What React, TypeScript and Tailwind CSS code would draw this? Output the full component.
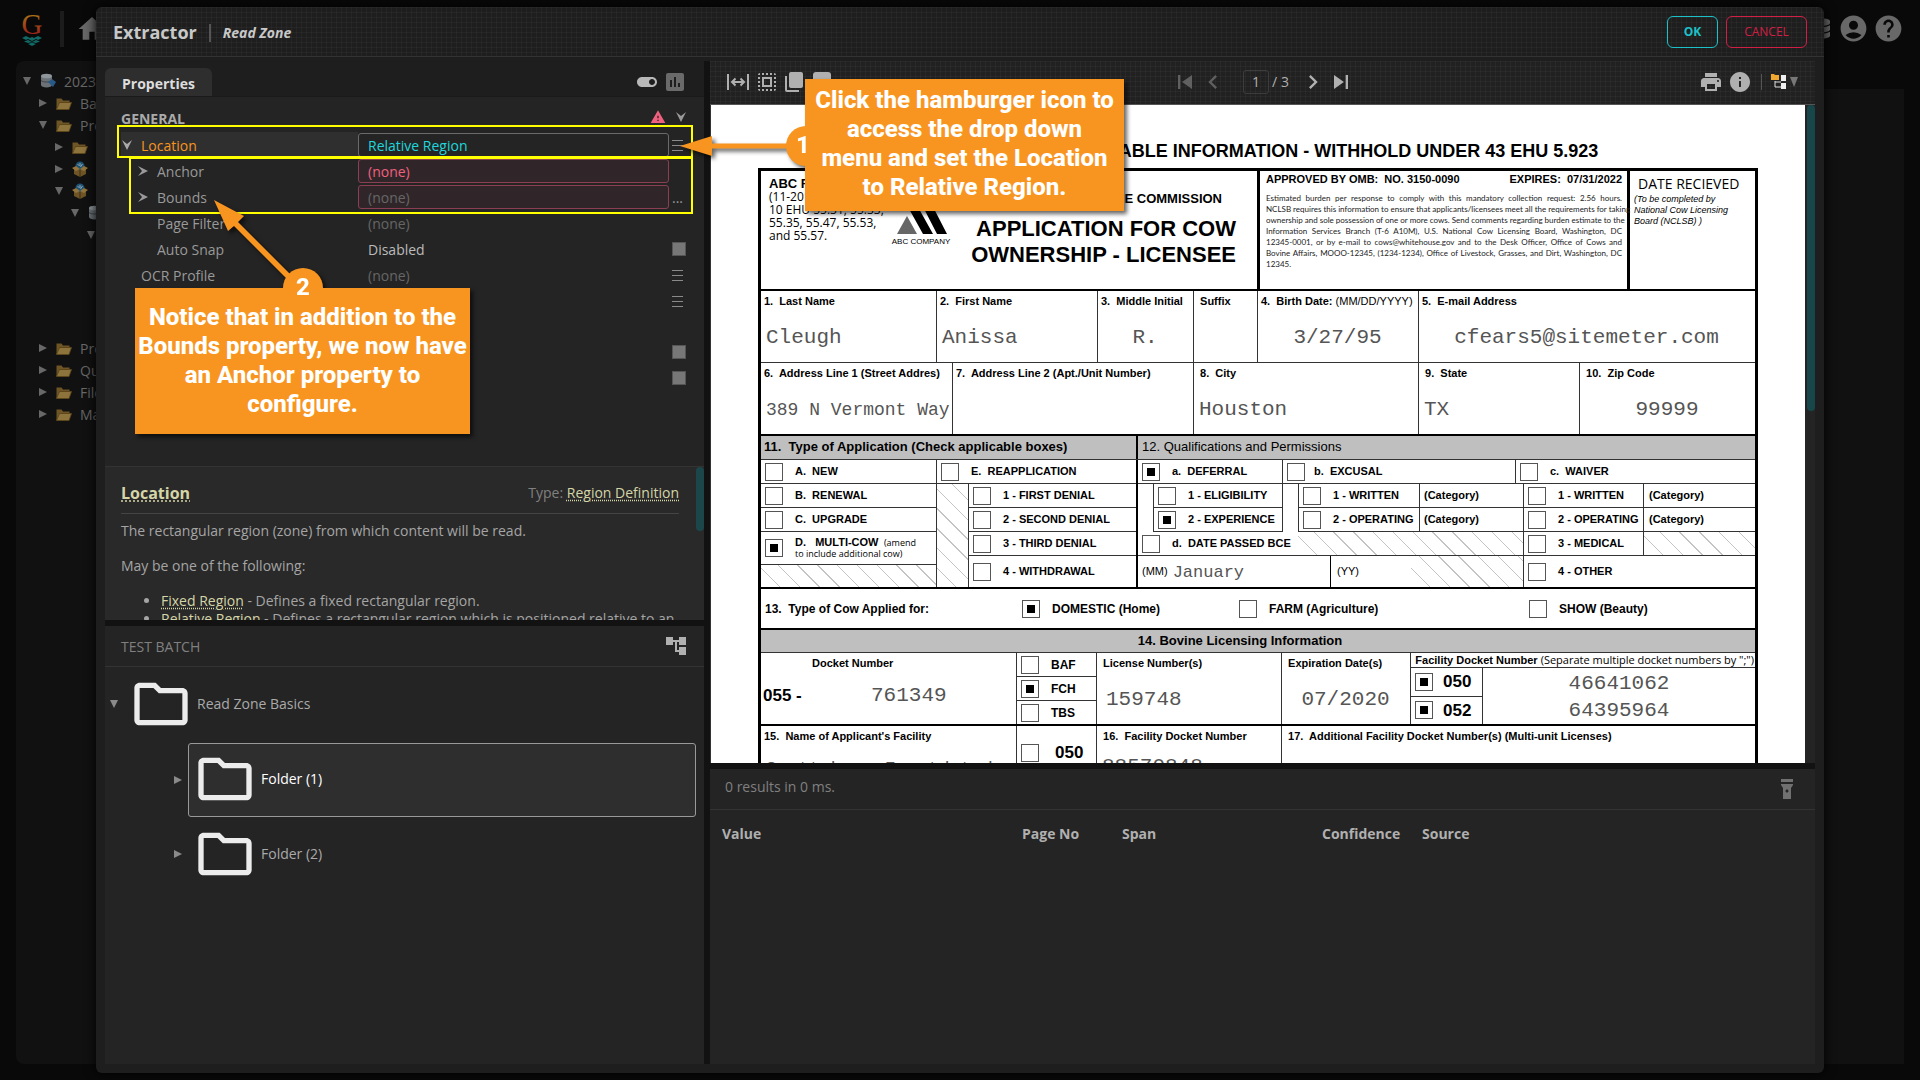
import type { ReactNode } from "react";
import { FaDatabase } from "react-icons/fa";
import {
  MdAccountCircle,
  MdAccountTree,
  MdAssessment,
  MdChevronLeft,
  MdChevronRight,
  MdFlashlightOn,
  MdHelp,
  MdHome,
  MdInfo,
  MdOutlineFolder,
  MdPrint,
  MdSelectAll,
  MdSkipNext,
  MdSkipPrevious,
  MdToggleOn,
  MdWarning,
} from "react-icons/md";

const GRID =
  "bg-[linear-gradient(to_right,#ffffff08_1px,transparent_1px),linear-gradient(to_bottom,#ffffff08_1px,transparent_1px)] bg-[size:5px_5px]";
const HATCH =
  "bg-[repeating-linear-gradient(45deg,#fff_0,#fff_13px,#c4c4c4_13px,#c4c4c4_14px)]";

/* ---------- small icons ---------- */

function Notch({ className = "" }: { className?: string }) {
  return (
    <svg viewBox="0 0 10 10" className={`h-[10px] w-[10px] shrink-0 ${className}`} fill="currentColor">
      <path d="M0 0 10 5 0 10 4 5z" />
    </svg>
  );
}

function Triangle({ open = false }: { open?: boolean }) {
  return (
    <svg viewBox="0 0 10 10" className="h-[10px] w-[10px] shrink-0" fill="currentColor">
      <path d={open ? "M1 1h8L5 9z" : "M1 1v8l8-4z"} />
    </svg>
  );
}

function OpenFolder() {
  return (
    <svg viewBox="0 0 16 13" className="h-[13px] w-4 shrink-0">
      <path d="M0.5 12V1.5h5l1.5 2h6.5V5H4L1.5 12z" fill="#6f5526" />
      <path d="M0.5 12.5 3.5 5.5h12L13 12.5z" fill="#8d733c" stroke="#5f4718" strokeWidth="0.8" />
    </svg>
  );
}

function Project() {
  return (
    <svg viewBox="0 0 16 16" className="h-4 w-4 shrink-0">
      <circle cx="8" cy="5" r="4.5" fill="#1f5373" />
      <path d="M5.5 3l2 2M8 2v3M10.5 3l-2 3" stroke="#8fa3ad" />
      <path d="M2 7l6 2 6-2v6l-6 3-6-3z" fill="#6f5526" />
      <path d="M8 9v7" stroke="#3d2f14" />
      <path d="M0 7l4-2 4 3 4-3 4 2-4 3-4-2-4 2z" fill="#94743a" />
    </svg>
  );
}

function Database() {
  return (
    <svg viewBox="0 0 16 16" className="h-4 w-4 shrink-0">
      <path d="M1 3v9c0 1.500 2.500 2.500 5.500 2.500S12 13.500 12 12V3z" fill="#6c7277" />
      <path d="M1 7.500c2 2 9 2 11 0" stroke="#3f4447" fill="none" />
      <ellipse cx="6.500" cy="3" rx="5.500" ry="2.300" fill="#8f979c" />
      <path d="M8 9l4-3 4 3-3 5z" fill="#285a86" />
    </svg>
  );
}

function FitWidth() {
  return (
    <svg viewBox="0 0 22 18" className="h-[18px] w-[22px]" fill="none" stroke="currentColor" strokeWidth="2">
      <path d="M1 1v16M21 1v16M5 9h12M8.500 5.500 5 9l3.500 3.500M13.500 5.500 17 9l-3.500 3.500" />
    </svg>
  );
}

function Pages() {
  return (
    <svg viewBox="0 0 18 20" className="h-5 w-[18px]" fill="currentColor">
      <rect x="4" y="0" width="14" height="16" rx="2" />
      <path d="M0 4h2v14h12v2H2a2 2 0 0 1-2-2z" />
    </svg>
  );
}

function MenuLines() {
  return (
    <svg viewBox="0 0 11 11" className="h-[11px] w-[11px]" stroke="#8a8a8a">
      <path d="M0 0.500h11M0 5.500h11M0 10.500h11" />
    </svg>
  );
}

/* ---------- page behind the dialog ---------- */

function TreeRow({ pad, open, icon, children }: { pad: string; open?: boolean; icon?: ReactNode; children?: ReactNode }) {
  return (
    <li className={`flex h-[22px] items-center ${pad}`}>
      <Triangle open={open} />
      <span className="ml-2 flex w-6 items-center">{icon}</span>
      <span className="text-[14px]">{children}</span>
    </li>
  );
}

function Backdrop() {
  return (
    <div className="flex h-screen flex-col bg-[#090909] text-[#686868]">
      <header className="flex h-[61px] shrink-0 items-center justify-between pr-4 pb-1 pl-5">
        <div className="flex items-center">
          <svg viewBox="0 0 24 34" className="mr-4 h-[34px] w-6 overflow-visible" role="img" aria-label="Logo">
            <defs>
              <linearGradient id="g" x1="0" y1="0" x2="0" y2="1">
                <stop offset="0.2" stopColor="#a87016" />
                <stop offset="0.8" stopColor="#98241a" />
              </linearGradient>
            </defs>
            <text x="12" y="22" textAnchor="middle" fontSize="29" fontFamily="Liberation Serif, serif" fill="url(#g)">
              G
            </text>
            <path d="M2 26l4-2 4 2-4 2zM14 26l4-2 4 2-4 2zM8 27l4-2 4 2-4 2zM4 29.500l4-1.500 4 2 4-2 4 1.500-4 1.500-4-1-4 1zM8 32l4-1.500 4 1.500-4 2z" fill="#0f6a66" />
          </svg>
          <span className="h-9 w-1 bg-[#1c1c1c]" />
          <MdHome className="ml-3 h-8 w-8" />
        </div>
        <div className="flex items-center gap-1">
          <FaDatabase className="h-[21px] w-[18px]" />
          <MdAccountCircle className="ml-1 h-[31px] w-[31px]" />
          <MdHelp className="h-[31px] w-[31px]" />
        </div>
      </header>
      <div className="flex flex-1 gap-[9px] px-4 pb-4">
        <ul className="w-[240px] rounded-lg bg-[#111] pt-[9px]">
          <TreeRow pad="pl-[6px]" open icon={<Database />}>2023</TreeRow>
          <TreeRow pad="pl-[22px]" icon={<OpenFolder />}>Batches</TreeRow>
          <TreeRow pad="pl-[22px]" open icon={<OpenFolder />}>Projects</TreeRow>
          <TreeRow pad="pl-[38px]" icon={<OpenFolder />} />
          <TreeRow pad="pl-[38px]" icon={<Project />} />
          <TreeRow pad="pl-[38px]" open icon={<Project />} />
          <TreeRow pad="pl-[54px]" open icon={<Database />} />
          <TreeRow pad="pl-[70px]" open />
          <li className="h-[91px]" />
          <TreeRow pad="pl-[22px]" icon={<OpenFolder />}>Processes</TreeRow>
          <TreeRow pad="pl-[22px]" icon={<OpenFolder />}>Queues</TreeRow>
          <TreeRow pad="pl-[22px]" icon={<OpenFolder />}>File Stores</TreeRow>
          <TreeRow pad="pl-[22px]" icon={<OpenFolder />}>Machines</TreeRow>
        </ul>
        <div className="mt-7 flex-1 bg-[#111]" />
      </div>
    </div>
  );
}

/* ---------- property grid ---------- */

type PropertyProps = {
  label?: string;
  pad?: string;
  value?: string;
  tone?: string;
  box?: string;
  arrow?: "open" | "closed";
  selected?: boolean;
  end?: "menu" | "dots" | "square";
};

function Property({ label, pad = "pl-5", value, tone = "text-[#666]", box = "border-transparent", arrow, selected, end }: PropertyProps) {
  return (
    <div className="flex h-[26px] items-center">
      <div
        className={`flex h-[26px] w-[237px] shrink-0 items-center text-[14px] ${
          selected ? "bg-[#2f2f2f] text-[#f79420]" : "text-[#999]"
        } ${pad}`}
      >
        {arrow && <Notch className={arrow === "open" ? "mr-[9px] rotate-90 text-[#aaa]" : "mr-[9px] text-[#999]"} />}
        {label}
      </div>
      <input
        aria-label={label || "Value"}
        readOnly
        value={value ?? ""}
        className={`h-6 min-w-0 flex-1 rounded-[3px] border px-[9px] text-[14px] outline-none ${box} ${tone}`}
      />
      <button type="button" aria-label={`Edit ${label ?? "value"}`} className="ml-[3px] flex h-6 w-4 shrink-0 items-center text-[#999]">
        {end === "menu" && <MenuLines />}
        {end === "dots" && <span className="text-[14px]">...</span>}
        {end === "square" && <span className="h-[14px] w-[14px] border border-[#555] bg-[#777]" />}
      </button>
    </div>
  );
}

const PINK_BOX = "border-[#8a3f52] bg-[#30262a]";

function Properties() {
  return (
    <section className="flex min-h-0 flex-1 flex-col bg-[#242424]">
      <div className="flex h-9 shrink-0 items-end justify-between border-b border-[#1a1a1a] bg-[#1e1e1e]">
        <button type="button" className="h-7 w-[107px] rounded-t-md bg-[#2e2e2e] pt-[2px] text-[14px] font-bold text-[#ddd]">
          Properties
        </button>
        <div className="flex h-7 items-center gap-1 pr-[17px] text-[#b8b8b8]">
          <MdToggleOn className="h-6 w-6" />
          <MdAssessment className="h-6 w-6 text-[#6a6a6a]" />
        </div>
      </div>
      <div className="flex h-[35px] shrink-0 items-end justify-between pr-[18px] pb-[3px] pl-4">
        <h2 className="text-[14px] font-bold text-[#aaa]">GENERAL</h2>
        <div className="flex items-center gap-[10px] pb-1">
          <MdWarning className="h-4 w-4 text-[#f0607f]" />
          <Notch className="rotate-90 text-[#999]" />
        </div>
      </div>
      <div className="pr-4 pl-4">
        <Property label="Location" pad="pl-[1px]" value="Relative Region" tone="text-[#1fd6dc]" box="border-[#6a6a6a]" arrow="open" selected end="menu" />
        <Property label="Anchor" pad="pl-[17px]" value="(none)" tone="text-[#f0607f]" box={PINK_BOX} arrow="closed" />
        <Property label="Bounds" pad="pl-[17px]" value="(none)" box={PINK_BOX} arrow="closed" end="dots" />
        <Property label="Page Filter" pad="pl-9" value="(none)" />
        <Property label="Auto Snap" pad="pl-9" value="Disabled" tone="text-[#bbb]" end="square" />
        <Property label="OCR Profile" value="(none)" end="menu" />
        <Property end="menu" />
        <div className="h-[25px]" />
        <Property end="square" />
        <Property end="square" />
      </div>
    </section>
  );
}

function HelpLink({ children }: { children: ReactNode }) {
  return (
    <a href="#" className="text-[#d5d5a8] underline decoration-dotted underline-offset-2">
      {children}
    </a>
  );
}

function Help() {
  return (
    <section className="flex h-[154px] shrink-0 border-t border-[#333] bg-[#292929] text-[14px] leading-[18px] text-[#a5a5a5]">
      <div className="flex-1 overflow-hidden pr-[17px] pl-4">
        <div className="flex h-[47px] items-end justify-between border-b border-[#444] pb-[11px]">
          <h3 className="text-[16px] leading-[18px] font-bold">
            <HelpLink>Location</HelpLink>
          </h3>
          <p className="text-[#808080]">
            Type: <HelpLink>Region Definition</HelpLink>
          </p>
        </div>
        <p className="mt-2">The rectangular region (zone) from which content will be read.</p>
        <p className="mt-[17px]">May be one of the following:</p>
        <ul className="mt-[17px] list-disc pl-10">
          <li>
            <HelpLink>Fixed Region</HelpLink> - Defines a fixed rectangular region.
          </li>
          <li className="whitespace-nowrap">
            <HelpLink>Relative Region</HelpLink> - Defines a rectangular region which is positioned relative to an
          </li>
        </ul>
      </div>
      <div className="w-2 shrink-0">
        <div className="h-16 rounded-full bg-[#1c474a]" />
      </div>
    </section>
  );
}

function TestBatch() {
  return (
    <section className="h-[438px] shrink-0 bg-[#242424] text-[14px] text-[#aaa]">
      <div className="flex h-[41px] items-center justify-between border-b border-[#333] pr-4 pl-4">
        <h2 className="text-[#808080]">TEST BATCH</h2>
        <MdAccountTree className="h-6 w-6 text-[#b0b0b0]" />
      </div>
      <ul className="text-[#8a8a8a]">
        <li className="flex h-[75px] items-center pb-[2px] pl-1">
          <Triangle open />
          <span className="flex items-center pl-[10px] text-[#aaa]">
            <MdOutlineFolder className="h-16 w-16 text-[#ececec]" />
            <span className="pl-1">Read Zone Basics</span>
          </span>
        </li>
        <li className="flex h-[75px] items-center gap-[5px] pr-2 pl-[68px]">
          <Triangle />
          <span className="flex h-[74px] flex-1 items-center rounded-[3px] border border-[#999] bg-[#2e2e2e] pb-[2px] pl-1 text-white">
            <MdOutlineFolder className="h-16 w-16 text-[#ececec]" />
            <span className="pl-1">Folder (1)</span>
          </span>
        </li>
        <li className="flex h-[75px] items-center gap-[5px] pr-2 pb-[2px] pl-[68px]">
          <Triangle />
          <span className="flex items-center pl-[5px] text-[#aaa]">
            <MdOutlineFolder className="h-16 w-16 text-[#ececec]" />
            <span className="pl-1">Folder (2)</span>
          </span>
        </li>
      </ul>
    </section>
  );
}

/* ---------- document ---------- */

function Check({ label, checked, gap = "pl-3", pad = "pl-1", className = "", children }: { label?: string; checked?: boolean; gap?: string; pad?: string; className?: string; children?: ReactNode }) {
  return (
    <label className={`flex items-center ${pad} ${className}`}>
      <input
        type="checkbox"
        defaultChecked={checked}
        className="h-[18px] w-[18px] shrink-0 appearance-none border border-[#555] bg-clip-content p-1 checked:bg-black"
      />
      <span className={`whitespace-pre ${gap}`}>{label ?? children}</span>
    </label>
  );
}

type FieldProps = {
  label: string;
  value?: string;
  note?: string;
  width?: string;
  align?: string;
  space?: string;
  small?: boolean;
};

function Field({ label, value, note, width = "flex-1", align = "pl-[2px] text-left", space = "mt-4", small }: FieldProps) {
  return (
    <div className={`border-r border-[#333] pt-[3px] pl-[3px] last:border-r-0 ${width}`}>
      <p className="text-[11px] leading-[14px] font-bold whitespace-pre">
        {label}
        {note && <span className="font-normal">{note}</span>}
      </p>
      <p
        className={`font-['Liberation_Mono',monospace] leading-7 whitespace-nowrap text-[#555] ${
          small ? "text-[18px]" : "text-[21px]"
        } ${align} ${space}`}
      >
        {value}
      </p>
    </div>
  );
}

function FormHead() {
  return (
    <div className="flex h-[120px] border-b-2">
      <div className="flex w-[499px] border-r-[3px]">
        <div className="w-[120px] pt-[6px] pl-2 font-['Open_Sans',sans-serif] text-[12px] leading-[13px] whitespace-nowrap">
          <p className="font-['Liberation_Sans',sans-serif] text-[13px] font-bold">ABC FORM</p>
          <p>(11-2018)</p>
          <p>10 EHU 55.31, 55.33,</p>
          <p>55.35, 55.47, 55.53,</p>
          <p>and 55.57.</p>
        </div>
        <div className="flex w-[76px] flex-col items-center justify-end pb-[42px] pl-1">
          <svg viewBox="0 0 52 36" className="h-9 w-[52px]">
            <path d="M2 35 12 17l10 18z" fill="#666" />
            <path d="M13 8h10l15 27H28zM24 0h10l18 35H42z" />
          </svg>
          <p className="mt-[2px] text-[8px] leading-[10px] whitespace-nowrap">ABC COMPANY</p>
        </div>
        <div className="flex-1 pt-5 pr-[21px] text-right font-bold">
          <p className="pr-[14px] text-[13px] leading-4">NATIONAL BOVINE COMMISSION</p>
          <p className="mt-[9px] text-[22px] leading-[26px] whitespace-nowrap">
            APPLICATION FOR COW
            <br />
            OWNERSHIP - LICENSEE
          </p>
        </div>
      </div>
      <div className="w-[370px] border-r-[3px] pr-[5px] pl-[6px]">
        <div className="flex justify-between text-[11px] leading-4 font-bold whitespace-pre">
          <span>APPROVED BY OMB:  NO. 3150-0090</span>
          <span>EXPIRES:  07/31/2022</span>
        </div>
        <div className="mt-[6px] font-['Lato',sans-serif] text-[8px] leading-[11px] whitespace-nowrap text-[#222] [text-align-last:justify]">
          <p>Estimated burden per response to comply with this mandatory collection request: 2.56 hours.</p>
          <p>NCLSB requires this information to ensure that applicants/licensees meet all the requirements for taking</p>
          <p>ownership and sole possession of one or more cows. Send comments regarding burden estimate to the</p>
          <p>Information Services Branch (T-6 A10M), U.S. National Cow Licensing Board, Washington, DC</p>
          <p>12345-0001, or by e-mail to cows@whitehouse.gov and to the Desk Officer, Office of Cows and</p>
          <p>Bovine Affairs, MOOO-12345, (1234-1234), Office of Livestock, Grasses, and Dirt, Washington, DC</p>
          <p className="[text-align-last:left]">12345.</p>
        </div>
      </div>
      <div className="flex-1 pt-[3px] pl-1">
        <p className="pl-1 font-['Open_Sans',sans-serif] text-[14px] leading-5">DATE RECIEVED</p>
        <p className="text-[9px] leading-[11px] italic">
          (To be completed by
          <br />
          National Cow Licensing
          <br />
          Board (NCLSB) )
        </p>
      </div>
    </div>
  );
}

function TypeOfApplication() {
  return (
    <div className="flex w-[377px] border-r-2">
      <div className="flex w-[176px] flex-col border-r border-[#333]">
        <Check label="A.  NEW" className="h-6 border-b border-[#333]" />
        <Check label="B.  RENEWAL" className="h-6 border-b border-[#333]" />
        <Check label="C.  UPGRADE" className="h-6 border-b border-[#333]" />
        <Check checked className="h-[33px] border-b border-[#333] leading-[11px]">
          D.   MULTI-COW <span className="font-['Open_Sans',sans-serif] text-[9px] font-normal"> (amend</span>
          <br />
          <span className="font-['Open_Sans',sans-serif] text-[9px] font-normal">to include additional cow)</span>
        </Check>
        <div className={`flex-1 ${HATCH}`} />
      </div>
      <div className="flex flex-1 flex-col">
        <Check label="E.  REAPPLICATION" className="h-6 border-b border-[#333]" />
        <div className="flex flex-1">
          <div className={`w-8 border-r border-[#333] ${HATCH}`} />
          <div className="flex flex-1 flex-col">
            <Check label="1 - FIRST DENIAL" className="h-6 border-b border-[#333]" />
            <Check label="2 - SECOND DENIAL" className="h-6 border-b border-[#333]" />
            <Check label="3 - THIRD DENIAL" className="h-6 border-b border-[#333]" />
            <Check label="4 - WITHDRAWAL" className="flex-1" />
          </div>
        </div>
      </div>
    </div>
  );
}

function Category() {
  return <div className="flex flex-1 items-center border-r border-[#333] pl-1">(Category)</div>;
}

function Qualifications() {
  return (
    <div className="flex flex-1 flex-col">
      <div className="flex h-6 border-b border-[#333]">
        <Check label="a.  DEFERRAL" checked className="w-[145px] border-r border-[#333]" />
        <Check label="b.  EXCUSAL" gap="pl-[9px]" className="w-[233px] border-r border-[#333]" />
        <Check label="c.  WAIVER" className="flex-1" />
      </div>
      <div className="flex">
        <div className="flex w-[145px] border-r border-[#333] pl-[15px]">
          <div className="flex flex-1 flex-col border-l border-[#333]">
            <Check label="1 - ELIGIBILITY" className="h-6 border-b border-[#333]" />
            <Check label="2 - EXPERIENCE" checked className="h-6 border-b border-[#333]" />
          </div>
        </div>
        <div className="flex flex-1 flex-col pl-[15px]">
          <div className="flex h-6 border-b border-l border-[#333]">
            <Check label="1 - WRITTEN" className="w-[121px] border-r border-[#333]" />
            <Category />
          </div>
          <div className="flex h-6 border-b border-l border-[#333]">
            <Check label="2 - OPERATING" className="w-[121px] border-r border-[#333]" />
            <Category />
          </div>
        </div>
        <div className="flex w-[231px] flex-col">
          <div className="flex h-6 border-b border-[#333]">
            <Check label="1 - WRITTEN" className="w-[120px] border-r border-[#333]" />
            <span className="flex items-center pl-[5px]">(Category)</span>
          </div>
          <div className="flex h-6 border-b border-[#333]">
            <Check label="2 - OPERATING" className="w-[120px] border-r border-[#333]" />
            <span className="flex items-center pl-[5px]">(Category)</span>
          </div>
        </div>
      </div>
      <div className="flex h-6 border-b border-[#333]">
        <Check label="d.  DATE PASSED BCE" className="w-[160px]" />
        <div className={`flex-1 border-r border-[#333] ${HATCH}`} />
        <Check label="3 - MEDICAL" className="w-[120px] border-r border-[#333]" />
        <div className={`w-[111px] ${HATCH}`} />
      </div>
      <div className="flex flex-1">
        <div className="flex w-[193px] items-center border-r border-black pl-1 font-normal">
          <span className="text-[11px]">(MM)</span>
          <span className="pt-[2px] pl-[5px] font-['Liberation_Mono',monospace] text-[17px] text-[#555]">January</span>
        </div>
        <div className="flex flex-1 items-center border-r border-[#333] pl-[6px] text-[11px] font-normal">
          <span className="w-[74px]">(YY)</span>
          <div className={`h-full flex-1 ${HATCH}`} />
        </div>
        <Check label="4 - OTHER" className="w-[231px]" />
      </div>
    </div>
  );
}

function LicensingRow() {
  return (
    <div className="flex h-[73px] border-b-2">
      <div className="w-[256px] border-r border-[#333] pt-[3px]">
        <p className="pl-[51px] text-[11px] leading-[14px] font-bold">Docket Number</p>
        <div className="flex items-baseline pt-[10px] pl-[2px]">
          <span className="w-[108px] text-[17px] font-bold">055 -</span>
          <span className="font-['Liberation_Mono',monospace] text-[21px] text-[#555]">761349</span>
        </div>
      </div>
      <div className="flex w-20 flex-col border-r border-[#333] text-[12px] font-bold">
        <Check label="BAF" className="flex-1 border-b border-[#333]" />
        <Check label="FCH" checked className="flex-1 border-b border-[#333]" />
        <Check label="TBS" className="flex-1" />
      </div>
      <Field label=" License Number(s)" value="159748" width="w-[185px]" align="pl-[6px] text-left" />
      <Field label=" Expiration Date(s)" value="07/2020" width="w-[129px]" align="pr-1 text-center" />
      <div className="flex flex-1 flex-col">
        <p className="h-4 border-b border-[#333] pr-px text-right text-[11px] leading-[14px] font-bold whitespace-nowrap">
          Facility Docket Number <span className="font-['Open_Sans',sans-serif] font-normal">(Separate multiple docket numbers by ";")</span>
        </p>
        <div className="flex flex-1">
          <div className="flex w-[72px] flex-col border-r border-[#333] text-[17px] font-bold">
            <Check label="050" checked gap="pl-[10px]" className="flex-1 border-b border-[#333]" />
            <Check label="052" checked gap="pl-[10px]" className="flex-1" />
          </div>
          <div className="flex-1 pt-[2px] text-center font-['Liberation_Mono',monospace] text-[21px] leading-[27px] text-[#555]">
            <p>46641062</p>
            <p>64395964</p>
          </div>
        </div>
      </div>
    </div>
  );
}

function Form() {
  return (
    <div className="mx-auto flex w-[1000px] shrink-0 flex-col border-[3px] border-black text-black [&_*]:border-solid">
      <FormHead />
      <div className="flex h-[72px] border-b border-[#333]">
        <Field label="1.  Last Name" value="Cleugh" width="w-[176px]" />
        <Field label="2.  First Name" value="Anissa" width="w-[161px]" />
        <Field label="3.  Middle Initial" value="R." width="w-[96px]" align="pr-1 text-center" />
        <Field label=" Suffix" width="w-[64px]" />
        <Field label="4.  Birth Date: " note="(MM/DD/YYYY)" value="3/27/95" width="w-[161px]" align="pr-1 text-center" />
        <Field label="5.  E-mail Address" value="cfears5@sitemeter.com" align="pr-1 text-center" />
      </div>
      <div className="flex h-[73px] border-b-2">
        <Field label="6.  Address Line 1 (Street Addres)" value="389 N Vermont Way" width="w-[192px]" small />
        <Field label="7.  Address Line 2 (Apt./Unit Number)" width="w-[241px]" />
        <Field label=" 8.  City" value="Houston" width="w-[225px]" />
        <Field label=" 9.  State" value="TX" width="w-[161px]" />
        <Field label=" 10.  Zip Code" value="99999" align="pr-1 text-center" />
      </div>
      <div className="flex h-6 border-b border-[#333] bg-[#bfbfbf] text-[13px] leading-[22px] whitespace-pre">
        <p className="w-[377px] border-r-2 border-black pl-[3px] font-bold">11.  Type of Application (Check applicable boxes)</p>
        <p className="pl-1">12. Qualifications and Permissions</p>
      </div>
      <div className="flex h-[129px] border-b-2 text-[11px] font-bold">
        <TypeOfApplication />
        <Qualifications />
      </div>
      <div className="flex h-[41px] items-center border-b-2 text-[12px] font-bold">
        <p className="w-[257px] pl-1 whitespace-pre">13.  Type of Cow Applied for:</p>
        <Check label="DOMESTIC (Home)" checked className="w-[217px]" />
        <Check label="FARM (Agriculture)" className="w-[290px]" />
        <Check label="SHOW (Beauty)" />
      </div>
      <p className="h-[23px] border-b border-[#333] bg-[#bfbfbf] pr-[36px] text-center text-[13px] leading-[22px] font-bold">
        14. Bovine Licensing Information
      </p>
      <LicensingRow />
      <div className="flex h-[73px]">
        <Field label="15.  Name of Applicant's Facility" value="Scottsboro Frontdated" width="w-[256px]" space="mt-3" small />
        <div className="w-20 border-r border-[#333] pt-[14px] text-[17px] font-bold">
          <Check label="050" gap="pl-4" />
        </div>
        <Field label=" 16.  Facility Docket Number" value="88570848" width="w-[185px]" space="mt-[10px]" />
        <Field label=" 17.  Additional Facility Docket Number(s) (Multi-unit Licenses)" />
      </div>
    </div>
  );
}

function Viewer() {
  return (
    <section className="flex min-h-0 flex-1 flex-col">
      <div className={`flex h-11 shrink-0 items-center border-b border-[#555] bg-[#212121] pr-4 pb-[2px] pl-[17px] text-[#b0b0b0] ${GRID}`}>
        <div className="flex flex-1 items-center gap-[6px]">
          <button type="button" aria-label="Fit width"><FitWidth /></button>
          <button type="button" aria-label="Select all"><MdSelectAll className="h-6 w-6" /></button>
          <button type="button" aria-label="Pages"><Pages /></button>
          <span className="ml-1 h-5 w-[18px] rounded-[3px] bg-[#b0b0b0]" />
        </div>
        <div className="flex items-center text-[14px]">
          <button type="button" aria-label="First page" className="text-[#606060]"><MdSkipPrevious className="h-7 w-7" /></button>
          <button type="button" aria-label="Previous page" className="text-[#606060]"><MdChevronLeft className="h-7 w-7" /></button>
          <input aria-label="Page" defaultValue="1" className="ml-4 h-6 w-[26px] rounded-[3px] border border-[#3c3c3c] text-center" />
          <span className="ml-[3px]">/ 3</span>
          <button type="button" aria-label="Next page" className="ml-[10px]"><MdChevronRight className="h-7 w-7" /></button>
          <button type="button" aria-label="Last page"><MdSkipNext className="h-7 w-7" /></button>
        </div>
        <div className="flex flex-1 items-center justify-end">
          <MdPrint className="h-6 w-6" />
          <MdInfo className="ml-[5px] h-6 w-6" />
          <span className="mx-[9px] h-4 w-px bg-[#555]" />
          <button type="button" aria-label="Document tree" className="flex items-center">
            <svg viewBox="0 0 16 16" className="h-4 w-4">
              <path d="M4 7v6h6M4 8h6" stroke="#ddd" fill="none" />
              <path d="M0 0h3l1 1h4v5H0z" fill="#f0a830" />
              <path d="M10 1h5v6h-5zM10 9h5v6h-5z" fill="#eee" />
            </svg>
            <svg viewBox="0 0 10 10" className="ml-[2px] h-[10px] w-[10px]" fill="#777">
              <path d="M1 0h8L5 10z" />
            </svg>
          </button>
        </div>
      </div>
      <div className="flex min-h-0 flex-1 border-l border-[#333] bg-[#242424]">
        <div className="min-h-0 flex-1 overflow-hidden bg-white font-['Liberation_Sans',sans-serif]">
          <h1 className="h-[63px] pt-9 text-center text-[18px] leading-5 font-bold text-black">
            PERSONALLY IDENTIFIABLE INFORMATION - WITHHOLD UNDER 43 EHU 5.923
          </h1>
          <Form />
        </div>
        <div className="w-[10px] shrink-0 pl-[2px]">
          <div className="h-[306px] rounded-full bg-[#17474a]" />
        </div>
      </div>
    </section>
  );
}

function Results() {
  return (
    <section className="h-[295px] shrink-0 bg-[#242424] text-[14px]">
      <div className="flex h-[41px] items-center justify-between border-b border-[#333] pr-4 pb-[6px] pl-[15px] text-[#808080]">
        <p>0 results in 0 ms.</p>
        <MdFlashlightOn className="mt-[6px] h-6 w-6 text-[#707070]" />
      </div>
      <table className="w-full table-fixed text-left font-bold text-[#b0b0b0]">
        <thead>
          <tr className="h-[46px]">
            <th className="w-[312px] pl-3">Value</th>
            <th className="w-[100px]">Page No</th>
            <th className="w-[200px]">Span</th>
            <th className="w-[100px]">Confidence</th>
            <th>Source</th>
          </tr>
        </thead>
      </table>
    </section>
  );
}

/* ---------- tutorial callouts ---------- */

const CALLOUT_TEXT = "font-['Roboto',sans-serif] text-[24px] leading-[29px] font-extrabold text-white";

function Callouts() {
  return (
    <>
      <div className="absolute top-[125px] left-[117px] h-[33px] w-[576px] border-2 border-[#ff0]" />
      <div className="absolute top-[157px] left-[129px] h-[57px] w-[564px] border-2 border-[#ff0]" />

      <div className="absolute top-[79px] left-[680px] drop-shadow-[3px_3px_2px_rgba(0,0,0,0.6)]">
        <svg viewBox="0 0 150 132" className="absolute top-0 left-0 h-[132px] w-[150px]" fill="#f89521">
          <path d="M0 67 32 57v7.500h80v5H32V77z" />
          <circle cx="126" cy="67" r="20" />
        </svg>
        <div className="relative ml-[125px] flex h-[132px] w-[319px] items-center justify-center bg-[#f89521] pb-[2px]">
          <p className={`text-center whitespace-nowrap ${CALLOUT_TEXT}`}>
            Click the hamburger icon to
            <br />
            access the drop down
            <br />
            menu and set the Location
            <br />
            to Relative Region.
          </p>
        </div>
        <span className={`absolute top-[52px] left-[116px] ${CALLOUT_TEXT}`}>1</span>
      </div>

      <div className="absolute top-[200px] left-[135px] drop-shadow-[3px_3px_2px_rgba(0,0,0,0.6)]">
        <svg viewBox="0 0 200 110" className="absolute top-0 left-0 h-[110px] w-[200px]" fill="#f89521">
          <path d="M79 0l30 16-6 6 53 53-4 4-53-53-6 5z" />
          <circle cx="168" cy="88" r="20" />
        </svg>
        <div className="relative mt-[88px] flex h-[146px] w-[335px] items-center justify-center bg-[#f89521]">
          <p className={`text-center whitespace-nowrap ${CALLOUT_TEXT}`}>
            Notice that in addition to the
            <br />
            Bounds property, we now have
            <br />
            an Anchor property to
            <br />
            configure.
          </p>
        </div>
        <span className={`absolute top-[73px] left-[161px] ${CALLOUT_TEXT}`}>2</span>
      </div>
    </>
  );
}

export default function App() {
  return (
    <main className="relative h-screen overflow-hidden font-['Open_Sans',sans-serif]">
      <Backdrop />
      <div role="dialog" aria-label="Extractor" className="absolute inset-x-24 inset-y-[7px] flex flex-col rounded-md bg-[#1e1e1e] shadow-[0_0_12px_#000]">
        <header className={`flex h-[50px] shrink-0 items-center justify-between rounded-t-md border-b border-[#333] pr-[17px] pl-[17px] ${GRID}`}>
          <div className="flex items-center pt-[2px] text-[#c8c8c8]">
            <h1 className="text-[18px] font-bold">Extractor</h1>
            <span className="mx-3 h-[18px] w-[2px] bg-[#555]" />
            <p className="text-[14px] font-bold italic">Read Zone</p>
          </div>
          <div className="flex gap-2 text-[12px]">
            <button type="button" className="h-8 w-[51px] rounded-md border border-[#1cc0c8] font-bold text-[#1cc0c8]">OK</button>
            <button type="button" className="h-8 w-[81px] rounded-md border border-[#d01f45] text-[#d01f45]">CANCEL</button>
          </div>
        </header>
        <div className="flex min-h-0 flex-1 px-[9px] pt-1 pb-[9px]">
          <div className="flex min-h-0 flex-1 gap-[6px] bg-[#121212]">
            <div className="flex w-[599px] shrink-0 flex-col">
              <Properties />
              <Help />
              <div className="h-[6px] shrink-0" />
              <TestBatch />
            </div>
            <div className="flex min-w-0 flex-1 flex-col gap-[6px]">
              <Viewer />
              <Results />
            </div>
          </div>
        </div>
      </div>
      <Callouts />
    </main>
  );
}
